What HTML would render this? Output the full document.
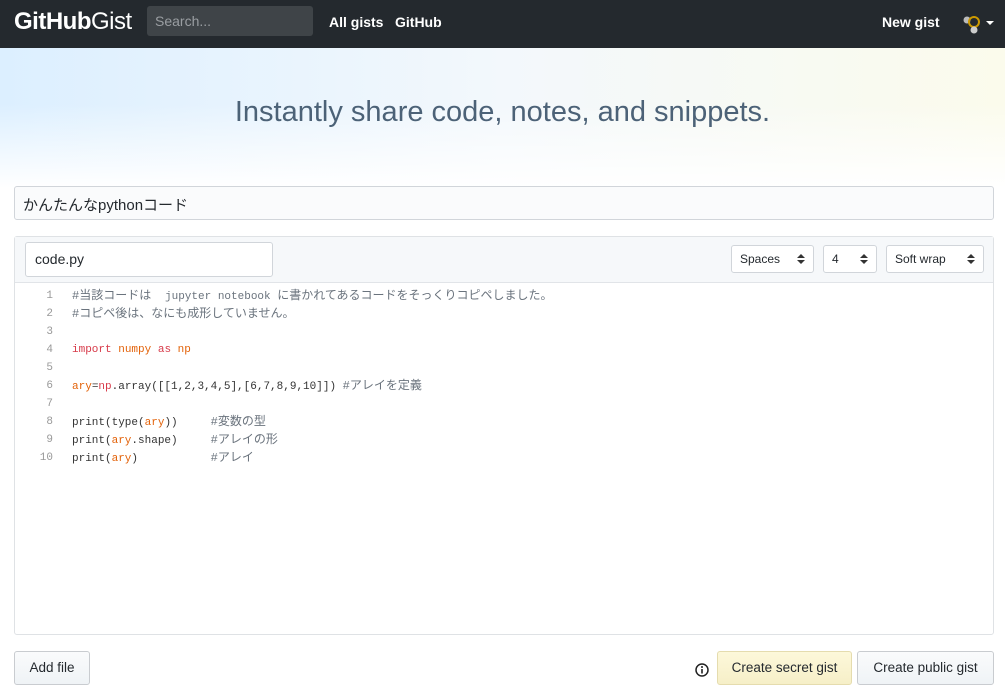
<!DOCTYPE html>
<html><head><meta charset="utf-8"><style>
*{box-sizing:border-box;margin:0;padding:0}
body{width:1005px;height:696px;overflow:hidden;background:#fff;font-family:"Liberation Sans","Noto Sans CJK JP",sans-serif;font-size:14px;color:#24292e;position:relative}
.nav{height:48px;background:#24292e;position:relative}
.logo{position:absolute;left:14px;top:8px;color:#fff;font-size:24px;letter-spacing:-0.5px}
.logo b{font-weight:bold}
.search{position:absolute;left:147px;top:6px;width:166px;height:30px;background:#3f4448;border-radius:3px;color:#9a9ea2;font-size:14px;padding:7px 8px}
.nl{position:absolute;top:14px;color:#fff;font-weight:bold;font-size:14px}
.hero{position:absolute;top:48px;left:0;width:1005px;height:140px;background:linear-gradient(180deg,rgba(255,255,255,0) 40%,#fff 100%),linear-gradient(90deg,#dcefff 0%,#f3f8fc 50%,#fbfbec 100%)}
.hero h1{position:absolute;top:48px;width:100%;text-align:center;font-weight:normal;font-size:29px;color:#4c6277;font-family:"Liberation Sans",sans-serif}
.desc{position:absolute;left:14px;top:186px;width:980px;height:34px;border:1px solid #d1d5da;border-radius:3px;background:#fafbfc;padding:7px 8px;font-size:15px}
.box{position:absolute;left:14px;top:236px;width:980px;height:399px;border:1px solid #dfe2e5;border-radius:3px}
.bh{height:46px;background:#f6f8fa;border-bottom:1px solid #e1e4e8;position:relative}
.fn{position:absolute;left:10px;top:5px;width:248px;height:35px;border:1px solid #d1d5da;border-radius:3px;background:#fff;padding:8px 9px;font-size:14px}
.sel{position:absolute;top:8px;height:28px;border:1px solid #d1d5da;border-radius:3px;background:#fff;font-size:12px;padding:6px 8px}
.sel:after{content:"";position:absolute;right:8px;top:8px;border:4px solid transparent;border-bottom:4px solid #333;border-top:0}
.sel:before{content:"";position:absolute;right:8px;top:14px;border:4px solid transparent;border-top:4px solid #333;border-bottom:0}
.code{position:absolute;left:0;top:50px;font-family:"Liberation Mono","Noto Sans CJK JP",monospace;font-size:11px;line-height:18px}
.ln{position:absolute;left:0;width:38px;text-align:right;color:#999}
.cl{position:absolute;left:57px;white-space:pre;color:#333}
.j{font-size:12px}
.c{color:#6a737d}.k{color:#d73a49}.o{color:#e36209}
.btn{position:absolute;top:651px;height:34px;border:1px solid #c9ccd0;border-radius:3px;font-size:13.5px;padding:8px 0;text-align:center;white-space:nowrap;background:linear-gradient(#fafbfc,#eff3f6)}
</style></head><body>
<div class="nav">
<div class="logo"><b>GitHub</b>Gist</div>
<div class="search">Search...</div>
<div class="nl" style="left:329px">All gists</div>
<div class="nl" style="left:395px">GitHub</div>
<div class="nl" style="left:882px">New gist</div>
<svg style="position:absolute;left:962px;top:14px" width="22" height="22"><circle cx="5" cy="6" r="3.5" fill="#bbb"/><circle cx="12" cy="8" r="5" fill="none" stroke="#c90" stroke-width="2"/><circle cx="12" cy="16" r="3.5" fill="#ccc"/></svg>
<div style="position:absolute;left:986px;top:21px;border:4px solid transparent;border-top:4px solid #fff"></div>
</div>
<div class="hero"><h1>Instantly share code, notes, and snippets.</h1></div>
<div class="desc">かんたんなpythonコード</div>
<div class="box">
<div class="bh"><div class="fn">code.py</div>
<div class="sel" style="left:716px;width:83px">Spaces</div>
<div class="sel" style="left:808px;width:54px">4</div>
<div class="sel" style="left:871px;width:98px">Soft wrap</div></div>
<div class="code">
<div class="ln" style="top:0">1</div><div class="cl c" style="top:0"><span class="j">#当該コードは </span> jupyter notebook <span class="j">に書かれてあるコードをそっくりコピペしました。</span></div>
<div class="ln" style="top:18px">2</div><div class="cl c j" style="top:18px">#コピペ後は、なにも成形していません。</div>
<div class="ln" style="top:36px">3</div>
<div class="ln" style="top:54px">4</div><div class="cl" style="top:54px"><span class="k">import</span> <span class="o">numpy</span> <span class="k">as</span> <span class="o">np</span></div>
<div class="ln" style="top:72px">5</div>
<div class="ln" style="top:90px">6</div><div class="cl" style="top:90px"><span class="o">ary</span>=<span class="k">np</span>.array([[1,2,3,4,5],[6,7,8,9,10]]) <span class="c j">#アレイを定義</span></div>
<div class="ln" style="top:108px">7</div>
<div class="ln" style="top:126px">8</div><div class="cl" style="top:126px">print(type(<span class="o">ary</span>))     <span class="c j">#変数の型</span></div>
<div class="ln" style="top:144px">9</div><div class="cl" style="top:144px">print(<span class="o">ary</span>.shape)     <span class="c j">#アレイの形</span></div>
<div class="ln" style="top:162px">10</div><div class="cl" style="top:162px">print(<span class="o">ary</span>)           <span class="c j">#アレイ</span></div>
</div>
</div>
<div class="btn" style="left:14px;width:76px">Add file</div>
<svg style="position:absolute;left:695px;top:663px" width="14" height="14"><circle cx="7" cy="7" r="6" fill="none" stroke="#222" stroke-width="1.5"/><rect x="6.2" y="6" width="1.6" height="4.5" fill="#222"/><circle cx="7" cy="4" r="1" fill="#222"/></svg>
<div class="btn" style="left:717px;width:135px;background:linear-gradient(#fdf8da,#f6efc8);border-color:#e5dcae">Create secret gist</div>
<div class="btn" style="left:857px;width:137px">Create public gist</div>
</body></html>
